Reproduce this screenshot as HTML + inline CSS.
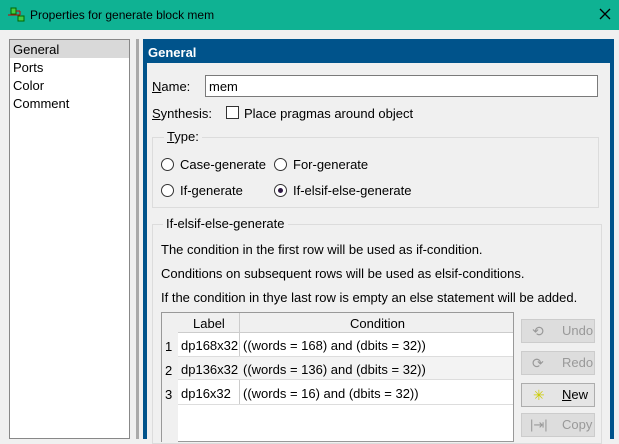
<!DOCTYPE html>
<html><head><style>
*{box-sizing:border-box;margin:0;padding:0}
body{width:619px;height:438px;overflow:hidden;background:#f0f0f0;font-family:"Liberation Sans",sans-serif;font-size:13px;color:#000;position:relative}
.a{position:absolute;white-space:nowrap}
.rad{position:absolute;width:13px;height:13px;border:1px solid #333;border-radius:50%;background:#fff}
.btn{position:absolute;left:521px;width:74px;height:24px;background:#ddd;border:1px solid #ccc;color:#999;font-size:13px;line-height:22px;padding-left:40px}
</style></head><body>
<div class="a" style="left:0;top:0;width:619px;height:30px;background:#0fb293"></div>
<svg class="a" style="left:8px;top:7px" width="18" height="16"><rect x="3" y="1" width="5" height="6" fill="#4c4" stroke="#060"/><rect x="10" y="9" width="6" height="5" fill="#4c4" stroke="#060"/><path d="M0 8H12M8 4H12M12 4V8" stroke="#c00" fill="none"/></svg>
<div class="a" style="left:30px;top:8px;font-size:12px">Properties for generate block mem</div>
<svg class="a" style="left:599px;top:8px" width="12" height="12"><path d="M1 1L11 11M11 1L1 11" stroke="#000" stroke-width="1.3"/></svg>
<div class="a" style="left:9px;top:39px;width:121px;height:400px;background:#fff;border:1px solid #888"></div>
<div class="a" style="left:10px;top:40px;width:119px;height:18px;background:#d9d9d9"></div>
<div class="a" style="left:13px;top:42px">General</div>
<div class="a" style="left:13px;top:60px">Ports</div>
<div class="a" style="left:13px;top:78px">Color</div>
<div class="a" style="left:13px;top:96px">Comment</div>
<div class="a" style="left:136px;top:39px;width:3px;height:400px;background:#aaa"></div>
<div class="a" style="left:143px;top:39px;width:471px;height:400px;background:#00538b"></div>
<div class="a" style="left:148px;top:45px;color:#fff;font-weight:bold;font-size:13px">General</div>
<div class="a" style="left:147px;top:63px;width:463px;height:376px;background:#f0f0f0"></div>
<div class="a" style="left:152px;top:79px"><u>N</u>ame:</div>
<div class="a" style="left:205px;top:75px;width:393px;height:22px;background:#fff;border:1px solid #7a7a7a;padding:3px 3px">mem</div>
<div class="a" style="left:152px;top:106px"><u>S</u>ynthesis:</div>
<div class="a" style="left:226px;top:106px;width:13px;height:13px;border:1px solid #333;background:#fff"></div>
<div class="a" style="left:244px;top:106px">Place pragmas around object</div>
<div class="a" style="left:152px;top:137px;width:447px;height:71px;border:1px solid #dcdcdc"></div>
<div class="a" style="left:164px;top:129px;background:#f0f0f0;padding:0 3px"><u>T</u>ype:</div>
<div class="rad" style="left:161px;top:158px"></div><div class="a" style="left:180px;top:157px">Case-generate</div>
<div class="rad" style="left:274px;top:158px"></div><div class="a" style="left:293px;top:157px">For-generate</div>
<div class="rad" style="left:161px;top:184px"></div><div class="a" style="left:180px;top:183px">If-generate</div>
<div class="rad" style="left:274px;top:184px"></div><div class="a" style="left:278px;top:188px;width:5px;height:5px;border-radius:50%;background:#301b44"></div><div class="a" style="left:293px;top:183px">If-elsif-else-generate</div>
<div class="a" style="left:152px;top:224px;width:450px;height:220px;border:1px solid #dcdcdc"></div>
<div class="a" style="left:163px;top:216px;background:#f0f0f0;padding:0 3px">If-elsif-else-generate</div>
<div class="a" style="left:161px;top:242px">The condition in the first row will be used as if-condition.</div>
<div class="a" style="left:161px;top:266px">Conditions on subsequent rows will be used as elsif-conditions.</div>
<div class="a" style="left:161px;top:290px">If the condition in thye last row is empty an else statement will be added.</div>
<div class="a" style="left:161px;top:312px;width:353px;height:130px;background:#fff;border:1px solid #999"></div>
<div class="a" style="left:162px;top:313px;width:16px;height:130px;background:#f0f0f0"></div>
<div class="a" style="left:178px;top:313px;width:335px;height:20px;background:#f0f0f0;border-bottom:1px solid #ccc"></div>
<div class="a" style="left:239px;top:313px;width:1px;height:92px;background:#ccc"></div>
<div class="a" style="left:193px;top:316px">Label</div>
<div class="a" style="left:350px;top:316px">Condition</div>
<div class="a" style="left:178px;top:356px;width:335px;height:24px;background:#f3f3f3;border-top:1px solid #ddd;border-bottom:1px solid #ddd"></div>
<div class="a" style="left:178px;top:404px;width:335px;height:1px;background:#ddd"></div>
<div class="a" style="left:165px;top:339px">1</div><div class="a" style="left:181px;top:338px">dp168x32</div><div class="a" style="left:243px;top:338px">((words = 168) and (dbits = 32))</div>
<div class="a" style="left:165px;top:363px">2</div><div class="a" style="left:181px;top:362px">dp136x32</div><div class="a" style="left:243px;top:362px">((words = 136) and (dbits = 32))</div>
<div class="a" style="left:165px;top:387px">3</div><div class="a" style="left:181px;top:386px">dp16x32</div><div class="a" style="left:243px;top:386px">((words = 16) and (dbits = 32))</div>
<div class="btn" style="top:319px"><span class="a" style="left:10px;top:0;font-size:14px;color:#999">⟲</span>Undo</div>
<div class="btn" style="top:351px"><span class="a" style="left:10px;top:0;font-size:14px;color:#999">⟳</span>Redo</div>
<div class="btn" style="top:383px;background:#e5e5e5;border-color:#adadad;color:#000"><span class="a" style="left:11px;top:0;font-size:14px;color:#cc0">✳</span><u>N</u>ew</div>
<div class="btn" style="top:413px"><span class="a" style="left:8px;top:0;color:#999">|⇥|</span>Copy</div>
</body></html>
